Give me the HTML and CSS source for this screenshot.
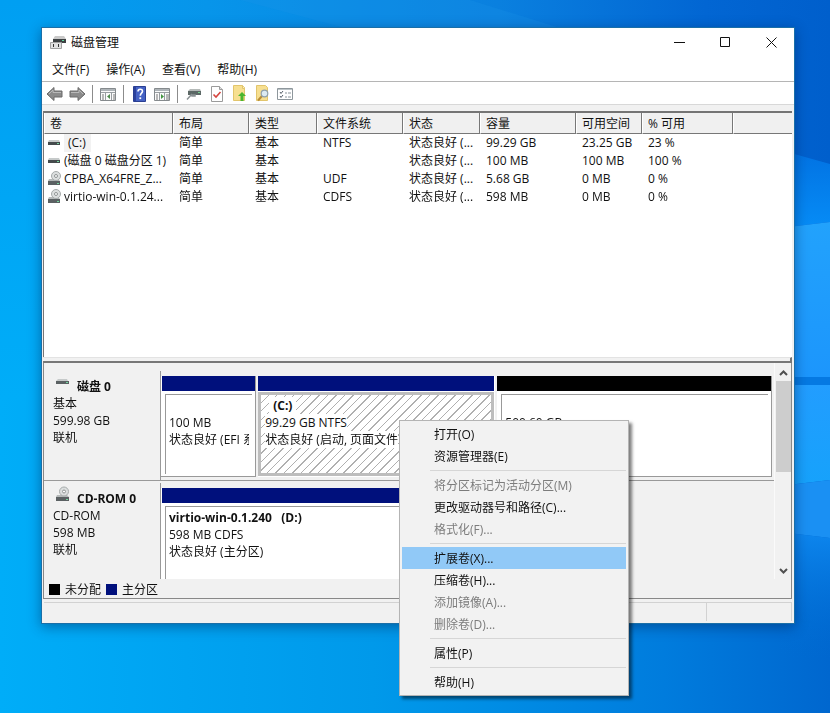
FILE: index.html
```html
<!DOCTYPE html>
<html lang="zh-CN">
<head>
<meta charset="utf-8">
<title>磁盘管理</title>
<link rel="stylesheet" href="styles.css">
</head>
<body>
<svg class="wallpaper" viewBox="0 0 830 713" preserveAspectRatio="none" aria-hidden="true">
  <defs>
    <linearGradient id="sky" x1="0" y1="0" x2="1" y2="0">
      <stop offset="0" stop-color="#009ff2"/><stop offset=".25" stop-color="#0795ea"/><stop offset=".6" stop-color="#0a80df"/><stop offset=".85" stop-color="#0266d3"/><stop offset="1" stop-color="#005fcc"/>
    </linearGradient>
    <linearGradient id="floor" x1="0" y1="0" x2="1" y2="0">
      <stop offset="0" stop-color="#00adf8"/><stop offset=".45" stop-color="#0099ea"/><stop offset=".8" stop-color="#007cdd"/><stop offset="1" stop-color="#0067cf"/>
    </linearGradient>
    <linearGradient id="edge" x1="0" y1="0" x2="0" y2="1">
      <stop offset="0" stop-color="#009ff2"/><stop offset="1" stop-color="#00adf8"/>
    </linearGradient>
    <linearGradient id="upper" x1="0" y1="0" x2="0" y2="1">
      <stop offset="0" stop-color="#0272e2"/><stop offset="1" stop-color="#068cf6"/>
    </linearGradient>
    <linearGradient id="pane" x1="0" y1="0" x2="0" y2="1">
      <stop offset="0" stop-color="#22a2fc"/><stop offset="1" stop-color="#1c96fc"/>
    </linearGradient>
    <linearGradient id="pane2" x1="0" y1="0" x2="0" y2="1">
      <stop offset="0" stop-color="#229dff"/><stop offset="1" stop-color="#16a2fb"/>
    </linearGradient>
    <linearGradient id="low" x1="0" y1="0" x2="0" y2="1">
      <stop offset="0" stop-color="#0d86ee"/><stop offset="1" stop-color="#006dd4" stop-opacity="0"/>
    </linearGradient>
  </defs>
  <rect width="830" height="713" fill="url(#sky)"/>
  <path d="M0 400H830V713H0Z" fill="url(#floor)"/>
  <path d="M0 0H60V400H0Z" fill="url(#edge)"/>
  <path d="M240 0L345 28H560L470 0Z" fill="#1d92e8" opacity=".25"/>
  <path d="M780 150L830 164V222L780 228Z" fill="url(#upper)"/>
  <path d="M780 228L830 222V377H780Z" fill="url(#pane)"/>
  <path d="M780 377H830V385H780Z" fill="#0579e2"/>
  <path d="M780 385H830V480L780 486Z" fill="url(#pane2)"/>
  <path d="M780 486L830 480V538L780 532Z" fill="#1a90f3"/>
  <path d="M780 532L830 538V660H780Z" fill="url(#low)"/>
</svg>

<main class="window">
  <header class="titlebar">
    <svg class="app-icon" width="16" height="16" viewBox="0 0 16 16" aria-hidden="true">
      <path d="M5 1h9l2 3H3z" fill="#c9c9c9"/><path d="M3 4h13v4H3z" fill="#3d4143"/><path d="M12 5h2v1h-2z" fill="#5fd6a0"/>
      <path d="M.5 7.500h11v6H.5z" fill="#e2e2e2" stroke="#a2a2a2"/><path d="M3 9h1v3H3zM8 9h1v3H8z" fill="#333"/>
    </svg>
    <h1>磁盘管理</h1>
    <div class="controls">
      <button type="button" aria-label="最小化"><svg width="11" height="11" viewBox="0 0 11 11"><path d="M0 5.500h11"/></svg></button>
      <button type="button" aria-label="最大化"><svg width="11" height="11" viewBox="0 0 11 11"><path d="M.5.5h9v9h-9z"/></svg></button>
      <button type="button" aria-label="关闭"><svg width="11" height="11" viewBox="0 0 11 11"><path d="M.5.5l10 10M10.500.5l-10 10"/></svg></button>
    </div>
  </header>

  <nav class="menubar">
    <button type="button">文件(F)</button>
    <button type="button">操作(A)</button>
    <button type="button">查看(V)</button>
    <button type="button">帮助(H)</button>
  </nav>

  <div class="toolbar" role="toolbar">
    <button type="button" aria-label="后退"><svg width="17" height="16" viewBox="0 0 17 16"><path d="M1 8l7-6.500V5h8v6H8v3.500z" fill="#8b8b8b" stroke="#6a6a6a"/><path d="M3 8l4-4v2.500h8" fill="none" stroke="#b9b9b9"/></svg></button>
    <button type="button" aria-label="前进"><svg width="17" height="16" viewBox="0 0 17 16"><path d="M16 8L9 1.500V5H1v6h8v3.500z" fill="#8b8b8b" stroke="#6a6a6a"/><path d="M2 6.500h8V4l4 4" fill="none" stroke="#b9b9b9"/></svg></button>
    <span class="divider"></span>
    <button type="button" aria-label="显示/隐藏控制台树"><svg width="17" height="16" viewBox="0 0 17 16"><path d="M.5 2.500h15v12H.5z" fill="#fafafa" stroke="#858a8d"/><path d="M1 3h14v2H1z" fill="#aeb4b8"/><path d="M1 6.500h14M5.500 7v7M11.500 7v7" stroke="#999ea2"/><path d="M2 9h2M2 11h2M2 13h2M13 9h2M13 11h2M13 13h2" stroke="#777"/><path d="M10 8v5L7 10.500z" fill="#4d8a4b"/></svg></button>
    <span class="divider"></span>
    <button type="button" aria-label="帮助"><svg width="14" height="16" viewBox="0 0 14 16"><path d="M.5.5h12v15H.5z" fill="#4562c4" stroke="#2a3f92"/><path d="M1 1h2v14H1z" fill="#2b419c"/><path d="M5 5.500c0-3 4.500-3 4.500-.3 0 1.900-2.200 2-2.200 4.600" fill="none" stroke="#fff" stroke-width="1.600"/><path d="M6.400 11.300h1.800v1.800H6.400z" fill="#fff"/></svg></button>
    <button type="button" aria-label="显示/隐藏操作窗格"><svg width="17" height="16" viewBox="0 0 17 16"><path d="M.5 2.500h15v12H.5z" fill="#fafafa" stroke="#858a8d"/><path d="M1 3h14v2H1z" fill="#aeb4b8"/><path d="M1 6.500h14M5.500 7v7M10.500 7v7" stroke="#999ea2"/><path d="M2 9h2M2 11h2M2 13h2M12 9h3M12 11h3M12 13h3" stroke="#777"/><path d="M7 8v5l3-2.500z" fill="#459742"/></svg></button>
    <span class="divider"></span>
    <button type="button" aria-label="连接"><svg width="16" height="16" viewBox="0 0 16 16"><path d="M4 3h10l1 2H2z" fill="#b5bab8"/><path d="M2 5h13v4H2z" fill="#5c6866"/><path d="M12 6h2v1h-2z" fill="#78d692"/><path d="M6 8l-5 5.500M6 9h3v1H6z" fill="#8b9294" stroke="#8b9294" stroke-width="1.500"/></svg></button>
    <button type="button" aria-label="检查"><svg width="14" height="16" viewBox="0 0 14 16"><path d="M1.500.5h8l3 3v12h-11z" fill="#fff" stroke="#9b9b9b"/><path d="M9.500.5v3h3" fill="#ddd" stroke="#9b9b9b"/><path d="M3.500 8.500l2.500 2.500 4.500-5" fill="none" stroke="#d5453f" stroke-width="1.600"/></svg></button>
    <button type="button" aria-label="向上"><svg width="15" height="17" viewBox="0 0 15 17"><path d="M1.500.5h9l2 2v13h-11z" fill="#f7df90" stroke="#e2c56c"/><path d="M10.500.5v3h2" fill="#fff3bf" stroke="#dfc36c"/><path d="M10 7l4 4h-2.500v5h-3v-5H6z" fill="#4ab52f"/></svg></button>
    <button type="button" aria-label="查找"><svg width="15" height="17" viewBox="0 0 15 17"><path d="M1.500.5h9l2 2v13h-11z" fill="#f7df90" stroke="#e2c56c"/><path d="M7 11l-4 4.500" stroke="#b88c36" stroke-width="2"/><circle cx="9.500" cy="8.500" r="3.300" fill="#dceaf2" stroke="#8fa0ac" stroke-width="1.200"/></svg></button>
    <button type="button" aria-label="属性"><svg width="17" height="16" viewBox="0 0 17 16"><path d="M.5 2.500h15v11H.5z" fill="#fff" stroke="#8e979c"/><path d="M1 3.500h14" stroke="#bdc5c9"/><path d="M3 6l1 1.500L6 5M3 10l1 1.500L6 9" fill="none" stroke="#555e68"/><path d="M8 7h2M11 7h3M8 11h2M11 11h3" stroke="#89939a"/></svg></button>
  </div>

  <section class="volumes">
    <table>
      <colgroup><col class="c-name"><col class="c-layout"><col class="c-type"><col class="c-fs"><col class="c-status"><col class="c-size"><col class="c-free"><col class="c-pct"><col></colgroup>
      <thead>
        <tr><th>卷</th><th>布局</th><th>类型</th><th>文件系统</th><th>状态</th><th>容量</th><th>可用空间</th><th>% 可用</th><th></th></tr>
      </thead>
      <tbody>
        <tr>
          <td><span class="vol"><svg width="14" height="16" viewBox="0 0 14 16" aria-hidden="true"><path d="M2 5h10l1 2H1z" fill="#c6caca"/><path d="M1 7h12v3H1z" fill="#454b4d"/><path d="M10 8h2v1h-2z" fill="#75d7a0"/></svg><span class="picked">(C:)</span></span></td>
          <td>简单</td><td>基本</td><td>NTFS</td><td>状态良好 (...</td><td>99.29 GB</td><td>23.25 GB</td><td>23 %</td><td></td>
        </tr>
        <tr>
          <td><span class="vol"><svg width="14" height="16" viewBox="0 0 14 16" aria-hidden="true"><path d="M2 5h10l1 2H1z" fill="#c6caca"/><path d="M1 7h12v3H1z" fill="#454b4d"/><path d="M10 8h2v1h-2z" fill="#75d7a0"/></svg><span>(磁盘 0 磁盘分区 1)</span></span></td>
          <td>简单</td><td>基本</td><td></td><td>状态良好 (...</td><td>100 MB</td><td>100 MB</td><td>100 %</td><td></td>
        </tr>
        <tr>
          <td><span class="vol"><svg width="14" height="16" viewBox="0 0 14 16" aria-hidden="true"><path d="M2 8h9l2 2H1z" fill="#b5b9b9"/><path d="M1 10h12v4H1z" fill="#5b6163"/><circle cx="9" cy="5" r="4.500" fill="#dcdfdf" stroke="#a5aaaa"/><circle cx="9" cy="5" r="1.500" fill="#fff" stroke="#8f9494"/><path d="M10 12h2v1h-2z" fill="#75d7a0"/></svg><span>CPBA_X64FRE_Z...</span></span></td>
          <td>简单</td><td>基本</td><td>UDF</td><td>状态良好 (...</td><td>5.68 GB</td><td>0 MB</td><td>0 %</td><td></td>
        </tr>
        <tr>
          <td><span class="vol"><svg width="14" height="16" viewBox="0 0 14 16" aria-hidden="true"><path d="M2 8h9l2 2H1z" fill="#b5b9b9"/><path d="M1 10h12v4H1z" fill="#5b6163"/><circle cx="9" cy="5" r="4.500" fill="#dcdfdf" stroke="#a5aaaa"/><circle cx="9" cy="5" r="1.500" fill="#fff" stroke="#8f9494"/><path d="M10 12h2v1h-2z" fill="#75d7a0"/></svg><span>virtio-win-0.1.24...</span></span></td>
          <td>简单</td><td>基本</td><td>CDFS</td><td>状态良好 (...</td><td>598 MB</td><td>0 MB</td><td>0 %</td><td></td>
        </tr>
      </tbody>
    </table>
  </section>
  <div class="splitter"></div>

  <section class="disks">
    <div class="disk-view">
      <div class="disk-list">
        <article class="disk">
          <div class="disk-info">
            <h2><svg width="16" height="16" viewBox="0 0 16 16" aria-hidden="true"><path d="M4 5h9l1 2H2z" fill="#c6caca"/><path d="M2 7h13v3H2z" fill="#5b6163"/><path d="M12 8h2v1h-2z" fill="#75d7a0"/></svg>磁盘 0</h2>
            <p>基本</p><p>599.98 GB</p><p>联机</p>
          </div>
          <div class="partitions">
            <div class="part p-efi"><div class="bar"></div><div class="box"><p>&nbsp;</p><p>100 MB</p><p>状态良好 (EFI 系</p></div></div>
            <div class="part p-c selected"><div class="bar"></div><div class="box"><p class="name"><span>(C:)</span></p><p><span>99.29 GB NTFS</span></p><p><span>状态良好 (启动, 页面文件</span></p></div></div>
            <div class="part p-free"><div class="bar unallocated"></div><div class="box"><p>&nbsp;</p><p>500.60 GB</p></div></div>
          </div>
        </article>
        <article class="disk">
          <div class="disk-info">
            <h2><svg width="16" height="16" viewBox="0 0 16 16" aria-hidden="true"><path d="M3 9h10l2 2H2z" fill="#b5b9b9"/><path d="M2 11h13v4H2z" fill="#5b6163"/><circle cx="10" cy="5.500" r="4.500" fill="#dcdfdf" stroke="#a5aaaa"/><circle cx="10" cy="5.500" r="1.500" fill="#fff" stroke="#8f9494"/><path d="M12 13h2v1h-2z" fill="#75d7a0"/></svg>CD-ROM 0</h2>
            <p>CD-ROM</p><p>598 MB</p><p>联机</p>
          </div>
          <div class="partitions">
            <div class="part p-cd"><div class="bar"></div><div class="box"><p class="name">virtio-win-0.1.240&nbsp;&nbsp; (D:)</p><p>598 MB CDFS</p><p>状态良好 (主分区)</p></div></div>
          </div>
        </article>
      </div>
      <div class="scrollbar" aria-hidden="true">
        <svg width="9" height="6" viewBox="0 0 9 6"><path d="M1 5l3.500-3.500L8 5"/></svg>
        <div class="track"><div class="thumb"></div></div>
        <svg width="9" height="6" viewBox="0 0 9 6"><path d="M1 1l3.500 3.500L8 1"/></svg>
      </div>
    </div>
    <div class="legend"><i class="swatch black"></i><span>未分配</span><i class="swatch navy"></i><span>主分区</span></div>
  </section>

  <footer class="statusbar"><span></span><span></span></footer>

  <div class="context-menu" role="menu">
    <button type="button" role="menuitem">打开(O)</button>
    <button type="button" role="menuitem">资源管理器(E)</button>
    <hr>
    <button type="button" role="menuitem" disabled>将分区标记为活动分区(M)</button>
    <button type="button" role="menuitem">更改驱动器号和路径(C)...</button>
    <button type="button" role="menuitem" disabled>格式化(F)...</button>
    <hr>
    <button type="button" role="menuitem" class="active">扩展卷(X)...</button>
    <button type="button" role="menuitem">压缩卷(H)...</button>
    <button type="button" role="menuitem" disabled>添加镜像(A)...</button>
    <button type="button" role="menuitem" disabled>删除卷(D)...</button>
    <hr>
    <button type="button" role="menuitem">属性(P)</button>
    <hr>
    <button type="button" role="menuitem">帮助(H)</button>
  </div>
</main>
</body>
</html>
```
FILE: styles.css
```css
* { box-sizing: border-box; }

body {
  margin: 0;
  min-height: 100vh;
  padding: 27px 35px 89px 41px;
  display: flex;
  font: 12px/17px "Open Sans", "Noto Sans CJK SC", sans-serif;
  color: #111;
  background: #0795ea;
}

h1, h2, p { margin: 0; font-size: 12px; font-weight: 400; }

button {
  margin: 0;
  padding: 0;
  border: 0;
  background: none;
  font: inherit;
  color: inherit;
}

.wallpaper { position: fixed; inset: 0; width: 100%; height: 100%; z-index: -1; }

.window {
  position: relative;
  flex: 1;
  min-width: 0;
  display: flex;
  flex-direction: column;
  background: #f1f1f1;
  border: 1px solid #1a6fa8;
  box-shadow: 0 3px 12px rgba(0, 30, 80, .45);
}

/* Title bar */
.titlebar { display: flex; align-items: center; height: 29px; padding-left: 8px; background: #fff; }
.titlebar h1 { margin-left: 5px; }
.controls { display: flex; align-self: stretch; margin-left: auto; }
.controls button { width: 46px; display: flex; align-items: center; justify-content: center; }
.controls svg { fill: none; stroke: #111; }

/* Menu bar */
.menubar { display: flex; gap: 17px; height: 25px; padding: 1px 0 0 10px; background: #fff; border-bottom: 1px solid #b5b5b5; }

/* Toolbar */
.toolbar { display: flex; align-items: center; height: 23px; padding: 1px 0 0 1px; margin-bottom: 6px; background: #fff; border-bottom: 1px solid #d8d8d8; }
.toolbar button { width: 23px; height: 22px; display: flex; align-items: center; justify-content: center; }
.divider { width: 1px; height: 18px; margin: 0 4px 0 3px; background: #8c8c8c; }

/* Volume list */
.volumes { flex: 1; margin: 0 2px 0 1px; background: #fff; border-top: 2px solid #747474; border-left: 1px solid #777; }
.volumes table { width: 100%; border-collapse: separate; border-spacing: 0; table-layout: fixed; }
.c-name { width: 129px; }
.c-layout { width: 76px; }
.c-type { width: 68px; }
.c-fs { width: 86px; }
.c-status { width: 77px; }
.c-size { width: 96px; }
.c-free { width: 66px; }
.c-pct { width: 91px; }
.volumes th {
  height: 21px;
  padding: 0 0 0 5px;
  text-align: left;
  font-weight: 400;
  background: #f0f0f0;
  border-left: 1px solid #fff;
  border-right: 1px solid #777;
  border-bottom: 1px solid #777;
}
.volumes th:last-child { border-right: 0; }
.volumes td { height: 18px; padding: 0 0 0 6px; line-height: 18px; white-space: nowrap; }
.volumes td:first-child { padding-left: 3px; }
.vol { display: flex; align-items: center; gap: 3px; }
.vol svg { flex: none; }
.picked { padding: 0 5px 0 4px; background: #f2f2f2; }

.splitter { height: 6px; margin: 0 2px 0 1px; border-top: 1px solid #e3e3e3; border-bottom: 2px solid #777; border-right: 2px solid #777; }

/* Graphical disk view */
.disks { margin: 0 2px 0 1px; border: 1px solid #888; border-top: 0; }
.disk-view { display: flex; height: 216px; }
.disk-list { flex: 1; min-width: 0; padding-top: 8px; overflow: hidden; }
.disk { display: flex; height: 110px; border-bottom: 1px solid #999; }
.disk + .disk { margin-top: 2px; border-bottom: 0; }
.disk-info { flex: none; width: 117px; padding: 7px 0 0 9px; border-right: 1px solid #999; }
.disk-info h2 { display: flex; align-items: center; gap: 7px; height: 17px; padding-left: 1px; font-weight: 700; }
.disk-info svg { align-self: flex-start; margin-top: -4px; }
.partitions { flex: 1; min-width: 0; display: flex; gap: 2px; padding: 5px 2px 3px 0; }
.part { min-width: 0; display: flex; flex-direction: column; background: #fff; border-right: 1px solid #999; border-bottom: 1px solid #999; }
.p-efi { flex: 95 1 0; }
.p-c { flex: 238 1 0; }
.p-free { flex: 276 1 0; }
.p-cd { flex: 0 0 66%; }
.bar { height: 15px; margin-left: 1px; background: #00107c; }
.bar.unallocated { margin-left: 0; background: #000; }
.box {
  flex: 1;
  margin: 3px 3px 2px 4px;
  padding: 2px 3px 0 3px;
  white-space: nowrap;
  background: #fff;
  border-top: 1px solid #999;
  border-left: 1px solid #999;
}
.box p { overflow: hidden; }
.name { font-weight: 700; }
.selected { border-color: #fff; }
.selected .bar { margin-left: 0; }
.selected .box {
  margin: 1px 0 0;
  padding: 2px 0 0 4px;
  border: 3px solid #bdbdbd;
  background: repeating-linear-gradient(135deg, #fff 0 5px, #b0b0b0 5px 6px);
}
.selected span { display: inline-block; background: #fff; }
.selected .name { padding-left: 4px; }
.selected .name span { padding: 0 4px; }

.scrollbar { width: 17px; display: flex; flex-direction: column; align-items: center; padding: 7px 0 5px; background: #f1f1f1; border-left: 1px solid #fafafa; }
.scrollbar svg { flex: none; fill: none; stroke: #505050; stroke-width: 2; }
.track { flex: 1; align-self: stretch; padding: 5px 0; }
.thumb { height: 91px; margin-left: 1px; background: #cdcdcd; }

.legend { display: flex; align-items: center; gap: 5px; height: 19px; padding: 2px 0 0 5px; }
.swatch { width: 11px; height: 11px; }
.black { background: #000; }
.navy { background: #00107c; }

.statusbar { display: flex; height: 24px; padding: 3px 2px 2px; }
.statusbar span { border-top: 1px solid #d2d2d2; border-right: 1px solid #d2d2d2; }
.statusbar span:first-child { flex: 1; }
.statusbar span:last-child { width: 85px; }

/* Shortcut menu */
.context-menu {
  position: absolute;
  left: 357px;
  top: 392px;
  width: 230px;
  padding: 2px;
  background: #f2f2f2;
  border: 1px solid #b4b4b4;
  box-shadow: 3px 3px 3px rgba(0, 0, 0, .5);
}
.context-menu button { display: block; width: 100%; height: 22px; padding-left: 32px; text-align: left; }
.context-menu button:disabled { color: #7c7c7c; }
.context-menu .active { background: #91c9f7; }
.context-menu hr { height: 1px; margin: 3px 0 3px 28px; border: 0; background: #d6d6d6; }
```
